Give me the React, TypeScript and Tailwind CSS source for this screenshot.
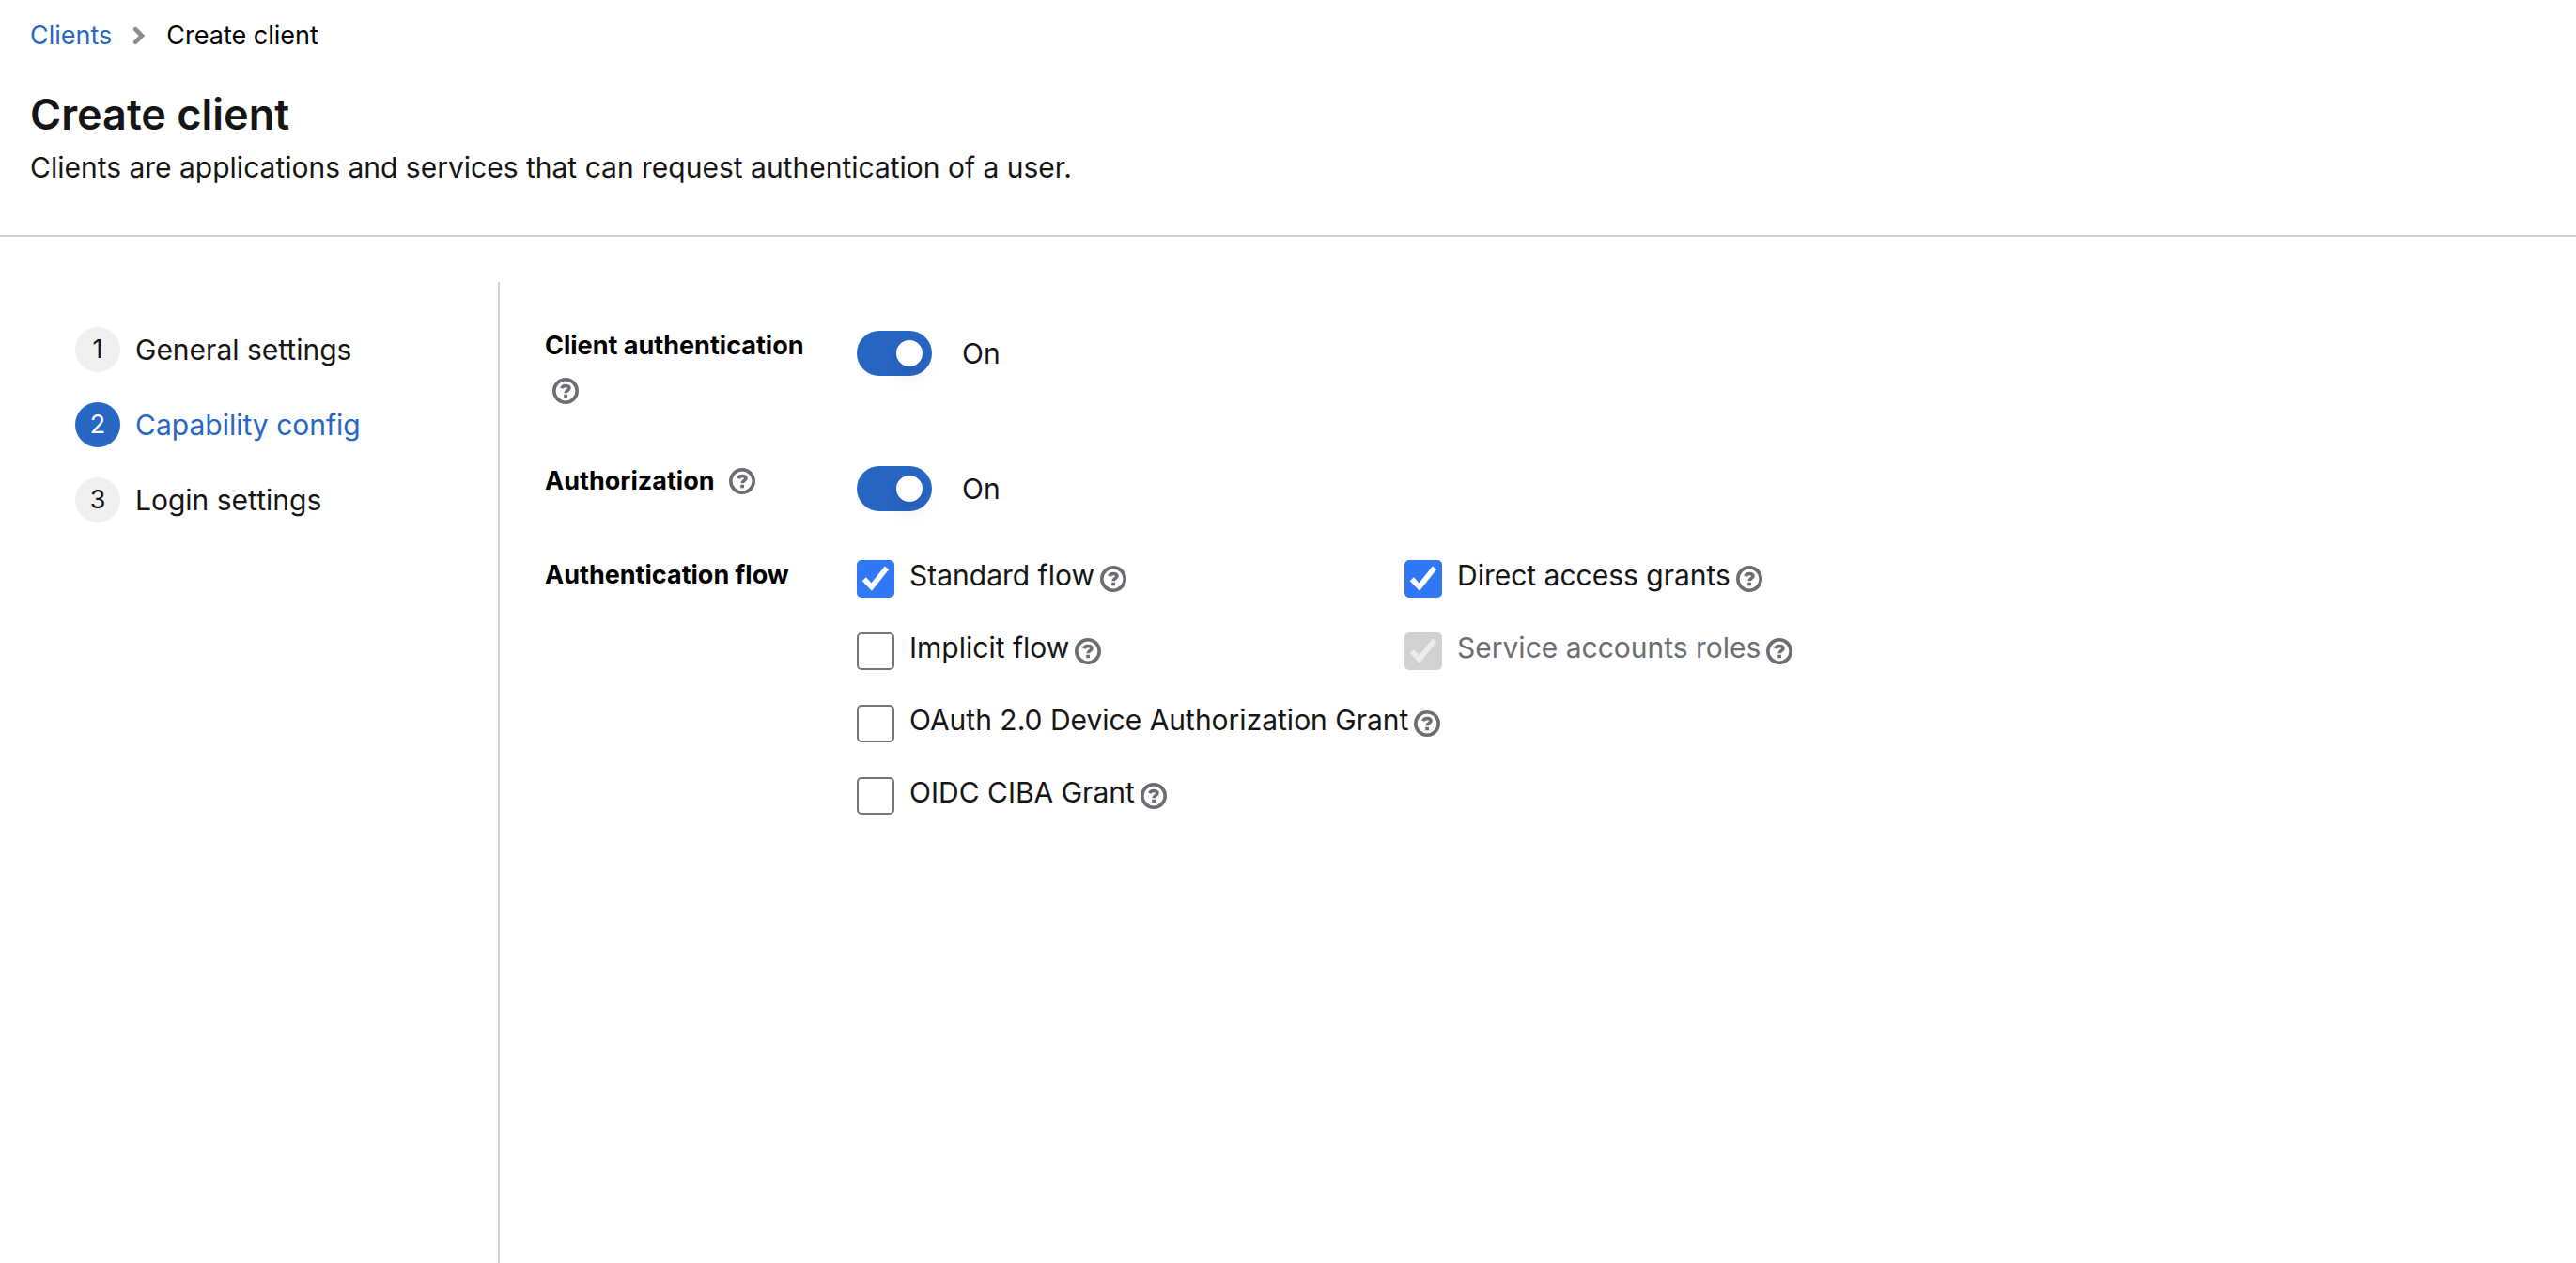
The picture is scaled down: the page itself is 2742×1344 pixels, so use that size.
import { useState } from "react";

function HelpIcon() {
  return (
    <svg viewBox="0 0 28 28" className="block size-7" aria-hidden="true">
      <circle cx="14" cy="14" r="12.2" fill="none" stroke="#6a6e73" strokeWidth="3.6" />
      <path
        d="M9.7 11.2C10.5 9.1 12 8.4 14 8.4C16.5 8.4 18 9.5 18 11.2C18 13.7 14.1 13.4 14.1 16.2"
        fill="none"
        stroke="#6a6e73"
        strokeWidth="3.5"
      />
      <rect x="12.2" y="17.8" width="3.8" height="3.4" rx="0.3" fill="#6a6e73" />
    </svg>
  );
}

function HelpButton({ label }: { label: string }) {
  return (
    <button type="button" aria-label={`Help for ${label}`} className="cursor-pointer">
      <HelpIcon />
    </button>
  );
}

function Step({ index, label, current = false }: { index: number; label: string; current?: boolean }) {
  return (
    <li>
      <button type="button" aria-current={current ? "step" : undefined} className="flex items-center gap-4 text-left">
        <span
          className={
            current
              ? "flex size-12 items-center justify-center rounded-full bg-[#2866c4] text-[27px] text-white"
              : "flex size-12 items-center justify-center rounded-full bg-[#f0f0f0] text-[27px]"
          }
        >
          {index}
        </span>
        <span className={current ? "text-[#2866c4]" : ""}>{label}</span>
      </button>
    </li>
  );
}

function SwitchRow({ id, label }: { id: string; label: string }) {
  const [on, setOn] = useState(true);
  return (
    <div className="flex items-start gap-8">
      <div className="w-[300px] shrink-0 text-[27px] leading-[48px] text-black">
        <label htmlFor={id} className="font-bold">
          {label}
        </label>{" "}
        <span className="ml-2 inline-flex h-12 items-center align-top">
          <HelpButton label={label} />
        </span>
      </div>
      <label className="flex items-center gap-8 pt-2 leading-[48px]">
        <input
          id={id}
          type="checkbox"
          role="switch"
          checked={on}
          onChange={() => setOn(!on)}
          className="peer sr-only"
        />
        <span className="flex h-12 w-20 items-center rounded-full bg-[#6a6e73] px-2.5 peer-checked:justify-end peer-checked:bg-[#2866c4]">
          <span className="size-7 rounded-full bg-white shadow-[0_8px_16px_rgba(0,0,0,0.12)]" />
        </span>
        <span>{on ? "On" : "Off"}</span>
      </label>
    </div>
  );
}

type FlowProps = { id: string; label: string; defaultChecked?: boolean; disabled?: boolean; wide?: boolean };

function Flow({ id, label, defaultChecked = false, disabled = false, wide = false }: FlowProps) {
  return (
    <div className={wide ? "col-span-2 flex items-start" : "flex items-start"}>
      <span className="grid">
        <input
          id={id}
          type="checkbox"
          defaultChecked={defaultChecked}
          disabled={disabled}
          className="peer col-start-1 row-start-1 size-10 appearance-none rounded-[5px] border-2 border-[#767676] bg-white checked:border-[#3178f6] checked:bg-[#3178f6] disabled:border-[#d1d1d1] disabled:bg-[#d1d1d1]"
        />
        <svg
          viewBox="0 0 40 40"
          aria-hidden="true"
          className="pointer-events-none invisible col-start-1 row-start-1 size-10 text-white peer-checked:visible peer-disabled:text-[#ececec]"
        >
          <path d="M7.8 20.2L15.8 28.6L32 8.3" fill="none" stroke="currentColor" strokeWidth="5.6" />
        </svg>
      </span>
      <label htmlFor={id} className={disabled ? "pl-4 leading-8 text-[#6a6e73]" : "pl-4 leading-8"}>
        {label}
      </label>
      <span className="flex h-10 items-center pl-1.5">
        <HelpButton label={label} />
      </span>
    </div>
  );
}

export default function App() {
  return (
    <div className="flex min-h-screen flex-col bg-white font-['Inter',sans-serif] text-[30px] text-[#151515]">
      <header className="border-b-2 border-[#d2d2d2] px-8 pt-4 pb-12">
        <nav aria-label="Breadcrumb">
          <ol className="flex items-center gap-[22px] text-[27px] leading-[44px]">
            <li>
              <a href="#clients" className="text-[#2866c4]">
                Clients
              </a>
            </li>
            <li className="flex items-center gap-[22px] text-black" aria-current="page">
              <svg viewBox="0 0 14 20" className="h-5 w-3.5" aria-hidden="true">
                <path
                  d="M3.2 3.2L10 10L3.2 16.8"
                  fill="none"
                  stroke="#8a8d90"
                  strokeWidth="4.6"
                  strokeLinecap="round"
                />
              </svg>
              Create client
            </li>
          </ol>
        </nav>
        <h1 className="pt-8 pb-0.5 text-[45px] leading-[60px] font-semibold">Create client</h1>
        <p className="leading-[48px]">Clients are applications and services that can request authentication of a user.</p>
      </header>
      <div className="flex grow pt-12">
        <nav aria-label="Wizard steps" className="w-[532px] shrink-0 border-r-2 border-[#d2d2d2] pt-12 pl-20">
          <ol className="flex flex-col gap-8">
            <Step index={1} label="General settings" />
            <Step index={2} label="Capability config" current />
            <Step index={3} label="Login settings" />
          </ol>
        </nav>
        <main className="grow px-12 pt-11">
          <form className="flex flex-col gap-12">
            <SwitchRow id="client-authentication" label="Client authentication" />
            <SwitchRow id="authorization" label="Authorization" />
            <div role="group" aria-labelledby="flow-title" className="flex items-start gap-8">
              <span id="flow-title" className="w-[300px] shrink-0 text-[27px] leading-10 font-bold text-black">
                Authentication flow
              </span>
              <div className="grid w-full max-w-[1166px] grid-cols-2 gap-y-[37px] pt-1">
                <Flow id="standard" label="Standard flow" defaultChecked />
                <Flow id="direct" label="Direct access grants" defaultChecked />
                <Flow id="implicit" label="Implicit flow" />
                <Flow id="service" label="Service accounts roles" defaultChecked disabled />
                <Flow id="device" label="OAuth 2.0 Device Authorization Grant" wide />
                <Flow id="ciba" label="OIDC CIBA Grant" wide />
              </div>
            </div>
          </form>
        </main>
      </div>
    </div>
  );
}
